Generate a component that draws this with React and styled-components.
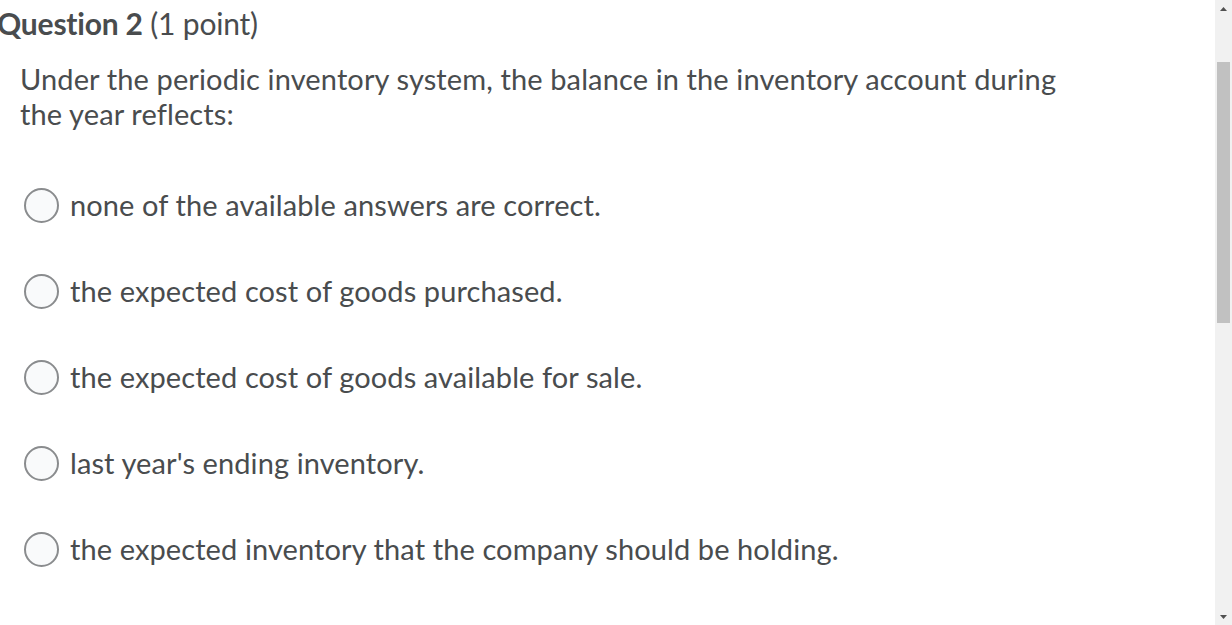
import styled, { createGlobalStyle } from "styled-components";

const Global = createGlobalStyle`
  html, body { margin: 0; padding: 0; background: #fff; overflow: hidden; }
  body { font-family: Lato, "Liberation Sans", sans-serif; color: #494c4e; }
`;

const Page = styled.div`
  display: flex;
  width: 1232px;
  height: 625px;
`;

const Content = styled.div`
  flex: 1;
  padding: 0 0 0 20px;
`;

const Title = styled.h2`
  margin: 3px 0 0 -23px;
  font-size: 30px;
  font-weight: 400;
  line-height: 40px;
  letter-spacing: -0.2px;
  b { font-weight: 700; }
`;

const Prompt = styled.p`
  margin: 18px 0 0;
  width: 1060px;
  font-size: 29px;
  line-height: 35px;
  letter-spacing: 0.12px;
`;

const Options = styled.div`
  display: flex;
  flex-direction: column;
  gap: 46px;
  margin-top: 54px;
`;

const Option = styled.label`
  display: flex;
  align-items: center;
  gap: 11px;
  font-size: 29px;
  line-height: 40px;
  letter-spacing: 0.1px;
  padding-left: 4px;
`;

const Radio = styled.span`
  box-sizing: border-box;
  width: 35px;
  height: 35px;
  border-radius: 50%;
  border: 2px solid #8a8c8e;
  background: #f9fafb;
  flex: none;
`;

const Scrollbar = styled.div`
  width: 17px;
  background: #f1f1f1;
  display: flex;
  flex-direction: column;
  align-items: center;
`;

const Arrow = styled.div`
  height: 17px;
  display: flex;
  align-items: center;
  justify-content: center;
`;

const Thumb = styled.div`
  width: 13px;
  height: 261px;
  background: #c1c1c1;
  margin-top: 45px;
`;

const Spacer = styled.div`
  flex: 1;
`;

const options = [
  "none of the available answers are correct.",
  "the expected cost of goods purchased.",
  "the expected cost of goods available for sale.",
  "last year's ending inventory.",
  "the expected inventory that the company should be holding.",
];

export default function App() {
  return (
    <Page>
      <Global />
      <Content>
        <Title>
          <b>Question 2</b> (1 point)
        </Title>
        <Prompt>
          Under the periodic inventory system, the balance in the inventory account during the
          year reflects:
        </Prompt>
        <Options>
          {options.map((o) => (
            <Option key={o}>
              <Radio />
              {o}
            </Option>
          ))}
        </Options>
      </Content>
      <Scrollbar>
        <Arrow>
          <svg width="7" height="4" viewBox="0 0 7 4">
            <path d="M0 4 L3.5 0 L7 4 Z" fill="#505050" />
          </svg>
        </Arrow>
        <Thumb />
        <Spacer />
        <Arrow>
          <svg width="7" height="4" viewBox="0 0 7 4">
            <path d="M0 0 L3.5 4 L7 0 Z" fill="#505050" />
          </svg>
        </Arrow>
      </Scrollbar>
    </Page>
  );
}
